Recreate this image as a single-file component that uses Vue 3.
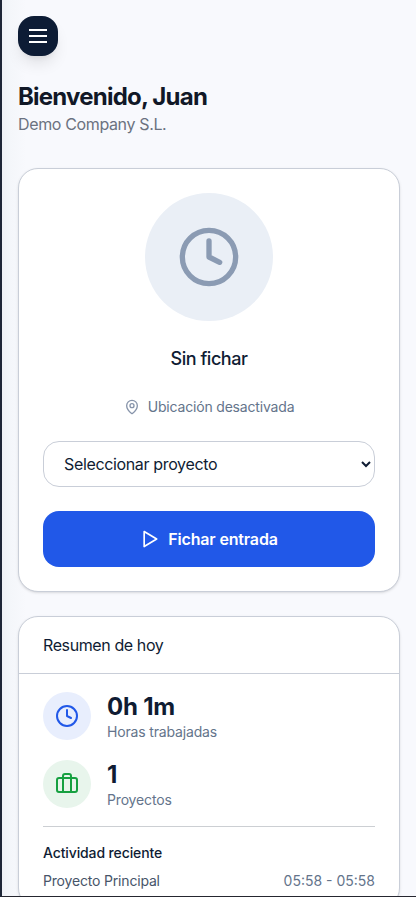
<script setup>
import { ref } from 'vue'

const project = ref('')
const stats = [
  { value: '0h 1m', label: 'Horas trabajadas', kind: 'clock' },
  { value: '1', label: 'Proyectos', kind: 'case' }
]
const activity = [{ name: 'Proyecto Principal', time: '05:58 - 05:58' }]
</script>

<template>
  <div class="frame">
    <main class="page">
      <button class="menu" aria-label="Menú">
        <svg width="24" height="24" viewBox="0 0 24 24"><path d="M3 6h18M3 12h18M3 18h18" /></svg>
      </button>

      <header class="welcome">
        <h1>Bienvenido, Juan</h1>
        <p>Demo Company S.L.</p>
      </header>

      <section class="card clock-card">
        <div class="status-circle">
          <svg width="64" height="64" viewBox="0 0 24 24"><circle cx="12" cy="12" r="10" /><path d="M12 6v6l4 2" /></svg>
        </div>
        <h2>Sin fichar</h2>
        <div class="location">
          <svg width="16" height="16" viewBox="0 0 24 24"><path d="M20 10c0 5-5.5 10.2-7.4 11.8a1 1 0 0 1-1.2 0C9.5 20.2 4 15 4 10a8 8 0 0 1 16 0" /><circle cx="12" cy="10" r="3" /></svg>
          <span>Ubicación desactivada</span>
        </div>
        <select v-model="project">
          <option value="">Seleccionar proyecto</option>
        </select>
        <button class="start">
          <svg width="20" height="20" viewBox="0 0 24 24"><path d="M5 3l15 9-15 9z" /></svg>
          <span>Fichar entrada</span>
        </button>
      </section>

      <section class="card">
        <div class="card-head">Resumen de hoy</div>
        <div class="summary">
          <div v-for="s in stats" :key="s.label" class="stat">
            <div class="badge" :class="s.kind">
              <svg v-if="s.kind === 'clock'" width="24" height="24" viewBox="0 0 24 24"><circle cx="12" cy="12" r="10" /><path d="M12 6v6l4 2" /></svg>
              <svg v-else width="24" height="24" viewBox="0 0 24 24"><rect x="2" y="6" width="20" height="14" rx="2" /><path d="M16 20V4a2 2 0 0 0-2-2h-4a2 2 0 0 0-2 2v16" /></svg>
            </div>
            <div>
              <p class="value">{{ s.value }}</p>
              <p class="label">{{ s.label }}</p>
            </div>
          </div>
          <div class="recent">
            <h3>Actividad reciente</h3>
            <div v-for="a in activity" :key="a.time" class="row">
              <span>{{ a.name }}</span>
              <span class="time">{{ a.time }}</span>
            </div>
          </div>
        </div>
      </section>
    </main>
  </div>
</template>

<style>
body {
  overflow: hidden;
}
</style>

<style scoped>
* {
  box-sizing: border-box;
}
.frame {
  height: 897px;
  overflow: hidden;
  border-left: 2px solid #1e2637;
  border-bottom: 1px solid #25262f;
  background: linear-gradient(to right, #eff1f6, #f4f6fa 8px, #f8f9fd 24px);
  font-family: Inter, sans-serif;
  color: #0f1c33;
}
.page {
  padding: 16px;
}
h1, h2, h3, p {
  margin: 0;
}
svg {
  display: block;
  flex: none;
  fill: none;
  stroke: currentColor;
  stroke-width: 2;
  stroke-linecap: round;
  stroke-linejoin: round;
}
.menu {
  display: flex;
  align-items: center;
  justify-content: center;
  width: 40px;
  height: 40px;
  padding: 0;
  border: 0;
  border-radius: 16px;
  background: #0d1c35;
  color: #fff;
  box-shadow: 0 10px 15px -3px rgba(0, 0, 0, 0.1), 0 4px 6px -4px rgba(0, 0, 0, 0.1);
}
.menu svg {
  stroke-linecap: butt;
}
.welcome {
  margin: 25px 0 32px;
}
.welcome h1 {
  font-size: 24px;
  line-height: 32px;
  font-weight: 700;
  letter-spacing: -0.78px;
  color: #111827;
}
.welcome p {
  margin-top: -1px;
  font-size: 16px;
  line-height: 24px;
  letter-spacing: -0.36px;
  color: #6b7280;
}
.card {
  border: 1px solid #c9ced8;
  border-radius: 20px;
  background: #fff;
  box-shadow: 0 1px 3px rgba(0, 0, 0, 0.1), 0 1px 2px -1px rgba(0, 0, 0, 0.1);
}
.clock-card {
  display: flex;
  flex-direction: column;
  align-items: center;
  padding: 24px;
  margin-bottom: 24px;
}
.status-circle {
  display: flex;
  align-items: center;
  justify-content: center;
  width: 128px;
  height: 128px;
  border-radius: 50%;
  background: #eaeff6;
  color: #8b9bb3;
}
h2 {
  margin-top: 24px;
  font-size: 18px;
  line-height: 28px;
  font-weight: 500;
  letter-spacing: -0.48px;
}
.location {
  display: flex;
  align-items: center;
  gap: 8px;
  margin: 24px 0;
  font-size: 14px;
  line-height: 20px;
  letter-spacing: -0.18px;
  color: #64748b;
}
.location svg {
  color: #8794aa;
}
select {
  width: 100%;
  height: 46px;
  padding: 0 16px;
  border: 1px solid #c9ced8;
  border-radius: 16px;
  background: #fff;
  font-family: inherit;
  font-size: 16px;
  letter-spacing: -0.35px;
  color: #0f1c33;
}
.start {
  display: flex;
  align-items: center;
  justify-content: center;
  gap: 8px;
  width: 100%;
  height: 56px;
  margin-top: 24px;
  border: 0;
  border-radius: 16px;
  background: #2158e8;
  color: #fff;
  font: 600 16px/24px Inter, sans-serif;
  letter-spacing: -0.16px;
}
.card-head {
  height: 57px;
  padding: 16px 24px;
  border-bottom: 1px solid #c9ced8;
  font-size: 16px;
  line-height: 24px;
  letter-spacing: -0.4px;
}
.summary {
  padding: 16px 24px;
}
.stat {
  display: flex;
  align-items: center;
  gap: 16px;
  height: 52px;
  margin-bottom: 16px;
}
.badge {
  display: flex;
  align-items: center;
  justify-content: center;
  width: 48px;
  height: 48px;
  border-radius: 50%;
}
.badge.clock {
  background: #e8eefd;
  color: #2158e8;
}
.badge.case {
  background: #e8f5ec;
  color: #16a040;
}
.value {
  padding-top: 1px;
  font-size: 24px;
  line-height: 32px;
  font-weight: 700;
  letter-spacing: -0.2px;
}
.label {
  margin-top: -1px;
  font-size: 14px;
  line-height: 20px;
  letter-spacing: -0.16px;
  color: #64748b;
}
.recent {
  padding-top: 16px;
  border-top: 1px solid #cccfd3;
  font-size: 14px;
  line-height: 20px;
}
h3 {
  margin-bottom: 8px;
  font-size: 14px;
  line-height: 20px;
  font-weight: 500;
  letter-spacing: -0.12px;
}
.row {
  display: flex;
  justify-content: space-between;
  letter-spacing: -0.18px;
  color: #475569;
}
.time {
  letter-spacing: 0;
  color: #64748b;
}
</style>
